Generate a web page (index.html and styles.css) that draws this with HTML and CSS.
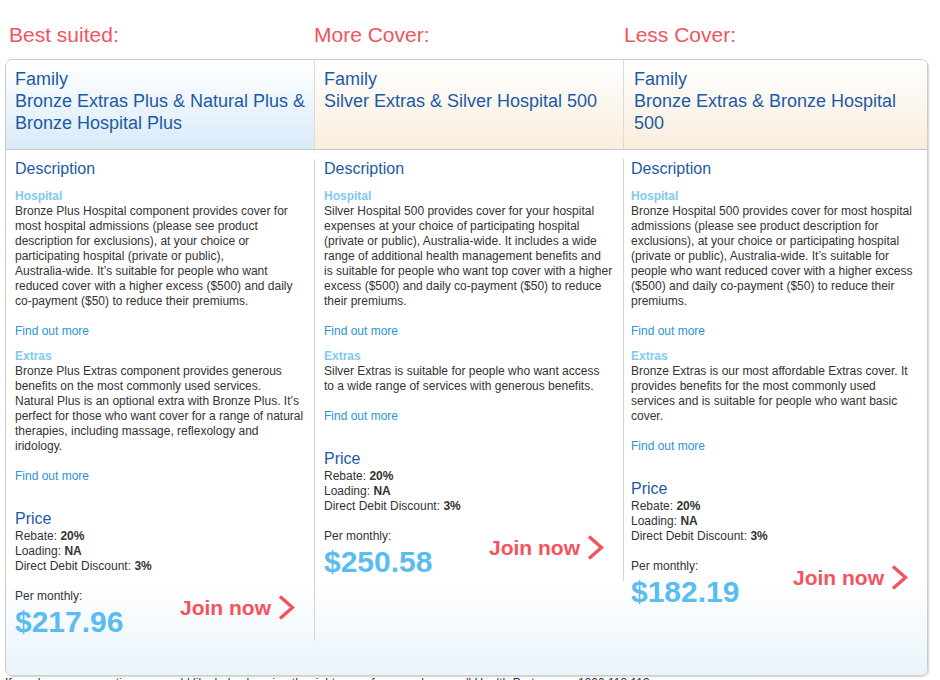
FILE: index.html
```html
<!DOCTYPE html>
<html lang="en">
<head>
<meta charset="utf-8">
<title>Recommended covers</title>
<link rel="stylesheet" href="styles.css">
</head>
<body>
<div class="page">
  <div class="labels">
    <div class="label">Best suited:</div>
    <div class="label">More Cover:</div>
    <div class="label">Less Cover:</div>
  </div>

  <div class="card">
    <div class="head">
      <div class="hcell best">Family<br>Bronze Extras Plus &amp; Natural Plus &amp;<br>Bronze Hospital Plus</div>
      <div class="hcell alt">Family<br>Silver Extras &amp; Silver Hospital 500</div>
      <div class="hcell alt last">Family<br>Bronze Extras &amp; Bronze Hospital<br>500</div>
    </div>

    <div class="body">
      <div class="col">
        <h3 class="sec">Description</h3>
        <div class="kind">Hospital</div>
        <p class="txt">Bronze Plus Hospital component provides cover for<br>most hospital admissions (please see product<br>description for exclusions), at your choice or<br>participating hospital (private or public),<br>Australia-wide. It’s suitable for people who want<br>reduced cover with a higher excess ($500) and daily<br>co-payment ($50) to reduce their premiums.</p>
        <a class="more" href="#">Find out more</a>
        <div class="kind gap">Extras</div>
        <p class="txt">Bronze Plus Extras component provides generous<br>benefits on the most commonly used services.<br>Natural Plus is an optional extra with Bronze Plus. It’s<br>perfect for those who want cover for a range of natural<br>therapies, including massage, reflexology and<br>iridology.</p>
        <a class="more" href="#">Find out more</a>
        <h3 class="sec price-h">Price</h3>
        <div class="line">Rebate: <b>20%</b></div>
        <div class="line">Loading: <b>NA</b></div>
        <div class="line">Direct Debit Discount: <b>3%</b></div>
        <div class="buy">
          <div>
            <div class="line">Per monthly:</div>
            <div class="amount">$217.96</div>
          </div>
          <a class="join" href="#">Join now<svg class="chev" width="17" height="25" viewBox="0 0 17 25"><polyline points="2,1.5 14.5,12.5 2,23.5" fill="none" stroke="#f4525d" stroke-width="3.4"/></svg></a>
        </div>
      </div>

      <div class="col">
        <h3 class="sec">Description</h3>
        <div class="kind">Hospital</div>
        <p class="txt">Silver Hospital 500 provides cover for your hospital<br>expenses at your choice of participating hospital<br>(private or public), Australia-wide. It includes a wide<br>range of additional health management benefits and<br>is suitable for people who want top cover with a higher<br>excess ($500) and daily co-payment ($50) to reduce<br>their premiums.</p>
        <a class="more" href="#">Find out more</a>
        <div class="kind gap">Extras</div>
        <p class="txt">Silver Extras is suitable for people who want access<br>to a wide range of services with generous benefits.</p>
        <a class="more" href="#">Find out more</a>
        <h3 class="sec price-h">Price</h3>
        <div class="line">Rebate: <b>20%</b></div>
        <div class="line">Loading: <b>NA</b></div>
        <div class="line">Direct Debit Discount: <b>3%</b></div>
        <div class="buy">
          <div>
            <div class="line">Per monthly:</div>
            <div class="amount">$250.58</div>
          </div>
          <a class="join" href="#">Join now<svg class="chev" width="17" height="25" viewBox="0 0 17 25"><polyline points="2,1.5 14.5,12.5 2,23.5" fill="none" stroke="#f4525d" stroke-width="3.4"/></svg></a>
        </div>
      </div>

      <div class="col last">
        <h3 class="sec">Description</h3>
        <div class="kind">Hospital</div>
        <p class="txt">Bronze Hospital 500 provides cover for most hospital<br>admissions (please see product description for<br>exclusions), at your choice or participating hospital<br>(private or public), Australia-wide. It’s suitable for<br>people who want reduced cover with a higher excess<br>($500) and daily co-payment ($50) to reduce their<br>premiums.</p>
        <a class="more" href="#">Find out more</a>
        <div class="kind gap">Extras</div>
        <p class="txt">Bronze Extras is our most affordable Extras cover. It<br>provides benefits for the most commonly used<br>services and is suitable for people who want basic<br>cover.</p>
        <a class="more" href="#">Find out more</a>
        <h3 class="sec price-h">Price</h3>
        <div class="line">Rebate: <b>20%</b></div>
        <div class="line">Loading: <b>NA</b></div>
        <div class="line">Direct Debit Discount: <b>3%</b></div>
        <div class="buy">
          <div>
            <div class="line">Per monthly:</div>
            <div class="amount">$182.19</div>
          </div>
          <a class="join" href="#">Join now<svg class="chev" width="17" height="25" viewBox="0 0 17 25"><polyline points="2,1.5 14.5,12.5 2,23.5" fill="none" stroke="#f4525d" stroke-width="3.4"/></svg></a>
        </div>
      </div>
    </div>
  </div>

  <p class="footer">If you have any questions or would like help choosing the right cover for you, please call Health Partners on 1300 113 113</p>
</div>
</body>
</html>
```

FILE: styles.css
```css
html, body {
  margin: 0;
  padding: 0;
  background: #ffffff;
}

body {
  font-family: "Liberation Sans", Arial, sans-serif;
  color: #333333;
  font-size: 12px;
  line-height: 15px;
  overflow: hidden;
  height: 680px;
}

.page {
  width: 940px;
}

.labels {
  display: grid;
  grid-template-columns: 305px 310px 1fr;
  margin-left: 9px;
  padding-top: 23px;
  margin-bottom: 12px;
}

.label {
  font-size: 21px;
  line-height: 24px;
  color: #f2535e;
}

.card {
  box-sizing: border-box;
  width: 923px;
  margin-left: 5px;
  border: 1px solid #cdcdcd;
  border-radius: 7px;
  box-shadow: 1px 1px 2px rgba(0, 0, 0, 0.18);
  overflow: hidden;
}

.head {
  display: grid;
  grid-template-columns: 309px 309px minmax(0, 1fr);
  height: 89px;
  border-bottom: 1px solid #c9c9c9;
}

.hcell {
  min-width: 0;
  padding: 8px 0 0 9px;
  font-size: 18px;
  line-height: 22px;
  color: #1d5aa5;
  white-space: nowrap;
  border-right: 1px solid #dcdcdc;
  box-shadow: 1px 0 1px rgba(0, 0, 0, 0.06);
}

.hcell.best {
  background: linear-gradient(to bottom, #ffffff 0%, #eef6fc 45%, #d8eaf8 100%);
}

.hcell.alt {
  background: linear-gradient(to bottom, #ffffff 0%, #fcf7f0 45%, #faeedd 100%);
}

.hcell.last {
  border-right: none;
  box-shadow: none;
  padding-left: 10px;
}

.body {
  display: grid;
  grid-template-columns: 309px 309px minmax(0, 1fr);
  align-items: start;
  padding: 9px 0 34px 0;
  background: linear-gradient(to bottom, #ffffff 0%, #ffffff 82%, #eaf4fb 100%);
}

.col {
  min-width: 0;
  padding: 0 19px 1px 9px;
  border-right: 1px solid #d6d6d6;
}

.col.last {
  border-right: none;
  padding-left: 7px;
}

.sec {
  margin: 0;
  font-size: 16px;
  line-height: 20px;
  font-weight: normal;
  color: #1d5aa5;
}

.kind {
  margin-top: 10px;
  font-weight: bold;
  color: #7fc9f1;
}

.kind.gap {
  margin-top: 10px;
}

.txt {
  margin: 0;
  white-space: nowrap;
}

.more {
  display: block;
  margin-top: 15px;
  color: #2d93d6;
  text-decoration: none;
}

.price-h {
  margin-top: 25px;
}

.line b {
  font-weight: bold;
  color: #333333;
}

.buy {
  display: flex;
  justify-content: space-between;
  align-items: flex-start;
  margin-top: 15px;
}

.amount {
  font-size: 30px;
  line-height: 36px;
  font-weight: bold;
  color: #5bbcef;
}

.join {
  display: flex;
  align-items: center;
  gap: 7px;
  margin-top: 6px;
  font-size: 21px;
  line-height: 24px;
  font-weight: bold;
  color: #f4525d;
  text-decoration: none;
}

.chev {
  display: block;
}

.footer {
  margin: 0;
  padding-left: 5px;
  font-size: 12px;
  line-height: 15px;
  color: #333333;
}
```
